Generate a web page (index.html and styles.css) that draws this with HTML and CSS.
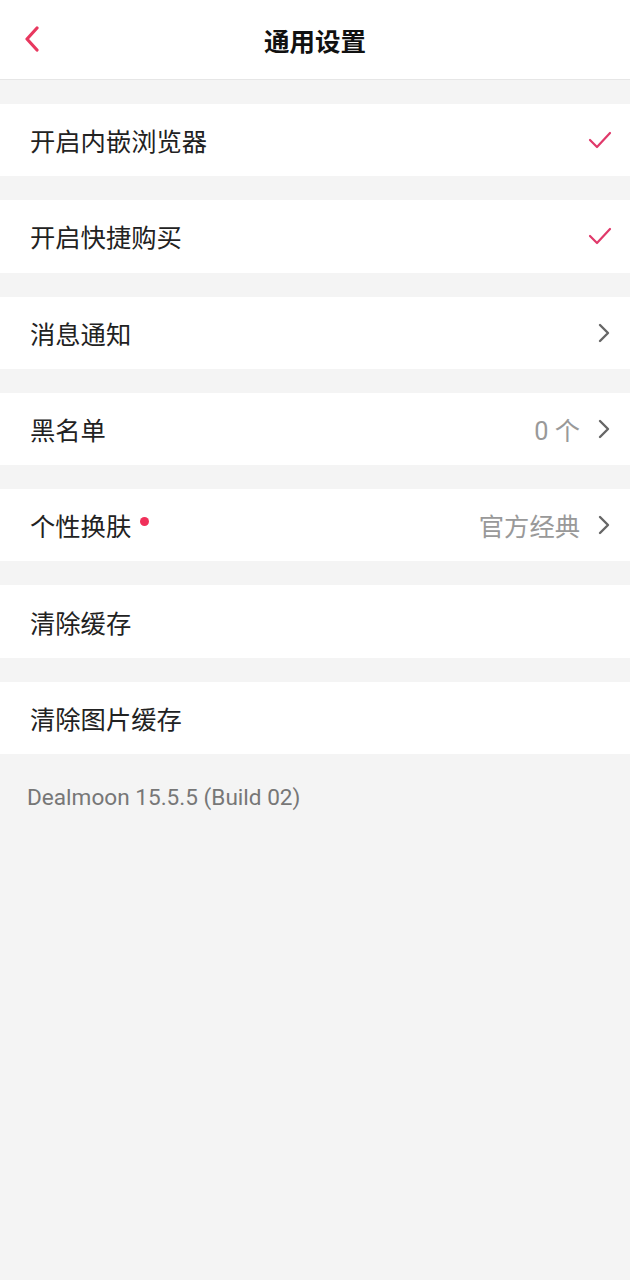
FILE: index.html
```html
<!DOCTYPE html>
<html lang="zh-CN">
<head>
  <meta charset="UTF-8">
  <meta name="viewport" content="width=device-width, initial-scale=1.0">
  <title>通用设置</title>
  <link rel="stylesheet" href="styles.css">
</head>
<body>
  <div class="header">
    <svg class="back" width="16" height="26" viewBox="0 0 16 26">
      <path d="M13 2 L3 13 L13 24" fill="none" stroke="#e8385f" stroke-width="3.2" stroke-linecap="round" stroke-linejoin="round"/>
    </svg>
    <div class="title">通用设置</div>
  </div>

  <div class="list">
    <div class="row">
      <span class="label">开启内嵌浏览器</span>
      <svg class="check" width="24" height="20" viewBox="0 0 24 20">
        <path d="M2 10 L9 17 L22 3" fill="none" stroke="#e0396a" stroke-width="2.2" stroke-linecap="round" stroke-linejoin="round"/>
      </svg>
    </div>
    <div class="row">
      <span class="label">开启快捷购买</span>
      <svg class="check" width="24" height="20" viewBox="0 0 24 20">
        <path d="M2 10 L9 17 L22 3" fill="none" stroke="#e0396a" stroke-width="2.2" stroke-linecap="round" stroke-linejoin="round"/>
      </svg>
    </div>
    <div class="row">
      <span class="label">消息通知</span>
      <svg class="arrow" width="12" height="20" viewBox="0 0 12 20">
        <path d="M2 2 L10 10 L2 18" fill="none" stroke="#666" stroke-width="2.4" stroke-linecap="round" stroke-linejoin="round"/>
      </svg>
    </div>
    <div class="row">
      <span class="label">黑名单</span>
      <span class="value">0 个</span>
      <svg class="arrow" width="12" height="20" viewBox="0 0 12 20">
        <path d="M2 2 L10 10 L2 18" fill="none" stroke="#666" stroke-width="2.4" stroke-linecap="round" stroke-linejoin="round"/>
      </svg>
    </div>
    <div class="row">
      <span class="label">个性换肤</span>
      <span class="dot"></span>
      <span class="value">官方经典</span>
      <svg class="arrow" width="12" height="20" viewBox="0 0 12 20">
        <path d="M2 2 L10 10 L2 18" fill="none" stroke="#666" stroke-width="2.4" stroke-linecap="round" stroke-linejoin="round"/>
      </svg>
    </div>
    <div class="row">
      <span class="label">清除缓存</span>
    </div>
    <div class="row">
      <span class="label">清除图片缓存</span>
    </div>
  </div>

  <div class="version">Dealmoon 15.5.5 (Build 02)</div>
</body>
</html>
```

FILE: styles.css
```css
body {
  margin: 0;
  background-color: #f4f4f4;
  font-family: Roboto, "Noto Sans CJK SC", sans-serif;
  min-height: 1280px;
}
.header {
  height: 79px;
  background: #fff;
  border-bottom: 1px solid #e6e6e6;
  display: flex;
  align-items: center;
  justify-content: center;
  position: relative;
}
.back {
  position: absolute;
  left: 24px;
  top: 26px;
}
.title {
  font-size: 25.5px;
  font-weight: bold;
  color: #111;
}
.list {
  padding-top: 24px;
}
.row {
  height: 72.3px;
  margin-bottom: 24px;
  background: #fff;
  display: flex;
  align-items: center;
  padding: 0 20px 0 30px;
}
.label {
  font-size: 25.3px;
  color: #222;
}
.dot {
  width: 9px;
  height: 9px;
  border-radius: 50%;
  background: #f0305a;
  margin: 0 0 8px 9px;
}
.value {
  margin-left: auto;
  font-size: 25.3px;
  color: #999;
}
.check {
  margin-left: auto;
  margin-right: -2px;
}
.arrow {
  margin-left: auto;
}
.value + .arrow {
  margin-left: 18px;
}
.version {
  margin-top: 30px;
  padding-left: 27px;
  font-size: 22.6px;
  color: #777;
}
```
